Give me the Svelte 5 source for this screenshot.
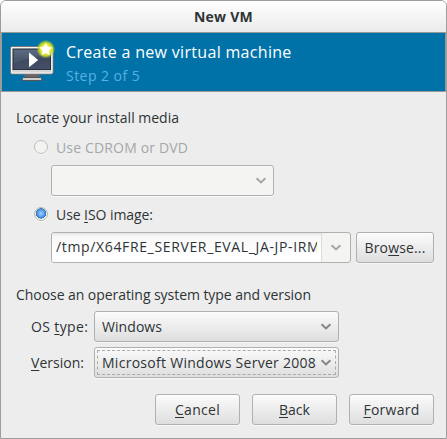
<script>
  // Spreads or tightens letter spacing so that a label fills its measured width.
  function fit(node, width) {
    node.style.letterSpacing = '0px';
    const natural = node.getBoundingClientRect().width;
    const count = node.textContent.length;
    node.style.letterSpacing = `${(width - natural) / (count - 0.5)}px`;
  }
</script>

{#snippet label(text, width, key = -1)}
  <span class="label" use:fit={width}>{#if key < 0}{text}{:else}{text.slice(0, key)}<u>{text[key]}</u>{text.slice(key + 1)}{/if}</span>
{/snippet}

{#snippet chevron()}
  <svg class="chevron" width="12" height="8" viewBox="0 0 12 8"><path d="M1.6 1.3 6 5.4 10.4 1.3" fill="none" stroke="currentColor" stroke-width="2" /></svg>
{/snippet}

<div class="window">
  <header class="titlebar">{@render label('New VM', 59)}</header>

  <section class="banner">
    <svg class="logo" width="48" height="44" viewBox="0 0 48 44">
      <defs>
        <radialGradient id="glow">
          <stop offset="0" stop-color="#fff" />
          <stop offset=".5" stop-color="#e8ef27" />
          <stop offset=".72" stop-color="#d0df22" stop-opacity=".85" />
          <stop offset="1" stop-color="#a8d030" stop-opacity="0" />
        </radialGradient>
        <linearGradient id="screen" x1="0" y1="0" x2="0" y2="1">
          <stop offset="0" stop-color="#56647c" />
          <stop offset=".5" stop-color="#3e495d" />
          <stop offset="1" stop-color="#445069" />
        </linearGradient>
        <linearGradient id="bezel" x1="0" y1="0" x2="0" y2="1">
          <stop offset="0" stop-color="#eee" />
          <stop offset="1" stop-color="#d3d3d3" />
        </linearGradient>
      </defs>
      <path d="M17 34h14l1 4H16z" fill="#666" />
      <rect x="14.5" y="37.5" width="19" height="3" rx=".8" fill="#ccc" stroke="#555" />
      <rect x="2.5" y="6.5" width="42.5" height="27.5" rx="1.5" fill="url(#bezel)" stroke="#777" />
      <rect x="3.5" y="7.5" width="40.5" height="25.5" rx=".5" fill="none" stroke="#f3f3f3" />
      <rect x="5" y="9" width="37.5" height="20.5" fill="url(#screen)" stroke="#29313e" />
      <path d="M6 10h36v5Q25 16 6 23z" fill="#8495ad" opacity=".2" />
      <path d="M21 12.6 30.2 20 21 27.2z" fill="#fff" />
      <circle cx="37.8" cy="9.2" r="9.4" fill="url(#glow)" />
      <path d="M37.8 2.7 39.8 6.8 44.3 7.4 41 10.6 41.8 15.3 37.8 13 33.8 15.3 34.6 10.6 31.3 7.4 35.8 6.8z" fill="#fff" />
    </svg>
    <div class="heading">
      <div class="title">{@render label('Create a new virtual machine', 225.5)}</div>
      <div class="step">{@render label('Step 2 of 5', 74)}</div>
    </div>
  </section>

  <main>
    <div class="caption">{@render label('Locate your install media', 163)}</div>
    <div class="choice disabled"><i class="radio"></i>{@render label('Use CDROM or DVD', 132)}</div>
    <div class="combo flat cdrom">{@render chevron()}</div>
    <div class="choice iso"><i class="radio on"></i>{@render label('Use ISO image:', 97, 4)}</div>
    <div class="media">
      <div class="entry">
        <div class="path"><div class="clip">{@render label('/tmp/X64FRE_SERVER_EVAL_JA-JP-IRM', 264)}</div></div>
        <div class="drop">{@render chevron()}</div>
      </div>
      <div class="button browse">{@render label('Browse...', 61, 3)}</div>
    </div>

    <div class="caption os">{@render label('Choose an operating system type and version', 295)}</div>
    <div class="field"><div class="name">{@render label('OS type:', 57, 3)}</div>
      <div class="combo">{@render label('Windows', 60)}{@render chevron()}</div></div>
    <div class="field version"><div class="name">{@render label('Version:', 53, 0)}</div>
      <div class="combo focused">{@render label('Microsoft Windows Server 2008', 214)}{@render chevron()}</div></div>

    <footer>
      <div class="button">{@render label('Cancel', 45, 0)}</div>
      <div class="button">{@render label('Back', 31, 0)}</div>
      <div class="button">{@render label('Forward', 56, 0)}</div>
    </footer>
  </main>
</div>

<style>
  :global(body) { margin: 0; background: #fff; }
  .window, .window * { box-sizing: border-box; }
  .window {
    width: 447px; height: 439px; overflow: hidden;
    border: 1px solid #9d9d9d; border-radius: 6px 6px 0 0;
    background: #ededed; color: #2e3436;
    font: 14px/20px "Open Sans", "Noto Sans", sans-serif;
  }
  .label { display: inline-block; white-space: pre; flex: none; }
  u { text-decoration: underline; text-decoration-thickness: 1px; text-underline-offset: 2px; text-decoration-skip-ink: none; }
  .titlebar {
    height: 31px; display: flex; justify-content: center; align-items: center;
    background: linear-gradient(#fefefe, #ebebeb); font-weight: 700;
  }
  .banner {
    height: 60px; display: flex; background: #0072a8;
    border: 1px solid #999; padding: 7px 0 0 6px;
  }
  .heading { padding: 0 0 0 10px; color: #fff; }
  .title { font-size: 16px; line-height: 24px; height: 24px; }
  .step { color: #59b1e3; line-height: 20px; height: 20px; margin-top: 2px; }
  main { padding: 16px 12px 0 15px; }
  .caption { height: 20px; }
  .choice { display: flex; align-items: center; height: 20px; margin: 10px 0 0 18px; }
  .choice .label { margin-left: 8px; }
  .disabled { color: #a5a8a8; }
  .radio { width: 14px; height: 14px; border-radius: 50%; border: 1px solid #bbbdb5; background: #f3f3f1; position: relative; top: -1px; box-shadow: 0 1px #fafafa; }
  .radio.on { border-color: #b5b8af; background: radial-gradient(circle at 50% 45%, #a5d0fb 0, #63a7f2 2.8px, #4a91e3 4px, #3f74b5 4.6px, #3f74b5 5px, #eef1f1 5.4px); }
  .combo, .button {
    height: 31px; display: flex; align-items: center;
    border: 1px solid #afb0af; border-radius: 3px;
    background: linear-gradient(#fbfbfb, #dedede);
    box-shadow: inset 0 1px #fff8, 0 1px #f8f8f8;
  }
  .combo { width: 245px; padding: 0 6px 0 7px; justify-content: space-between; color: #2e3436; }
  .chevron { color: #858682; flex: none; }
  .flat { background: #f4f4f2; justify-content: flex-end; }
  .cdrom { width: 223px; margin: 7px 0 0 35px; }
  .flat .chevron, .drop .chevron { color: #a5a7a3; }
  .iso { margin-top: 9px; }
  .media { display: flex; gap: 5px; margin: 7px 0 0 35px; }
  .entry { width: 300px; height: 31px; display: flex; border: 1px solid #afb0af; border-radius: 3px; overflow: hidden; background: #f4f4f2; }
  .path { width: 269px; padding: 4px 4px 0 4px; background: linear-gradient(#e4e4e4, #f7f7f7 3px, #fff 20px); }
  .clip { overflow: hidden; height: 23px; width: 261px; }
  .drop { flex: 1; display: flex; align-items: center; justify-content: center; border-left: 1px solid #dcdcda; padding-right: 1px; }
  .button { justify-content: center; width: 85px; }
  .browse { width: 78px; }
  .os { margin-top: 22px; }
  .field { display: flex; align-items: center; margin-top: 6px; }
  .version { margin-top: 5px; }
  .name { width: 63px; margin-left: 15px; }
  .focused { position: relative; }
  .focused::after { content: ""; position: absolute; inset: 2px; border: 1px dashed #aaaba9; border-radius: 1px; }
  footer { display: flex; justify-content: flex-end; gap: 12px; margin-top: 16px; }
</style>
